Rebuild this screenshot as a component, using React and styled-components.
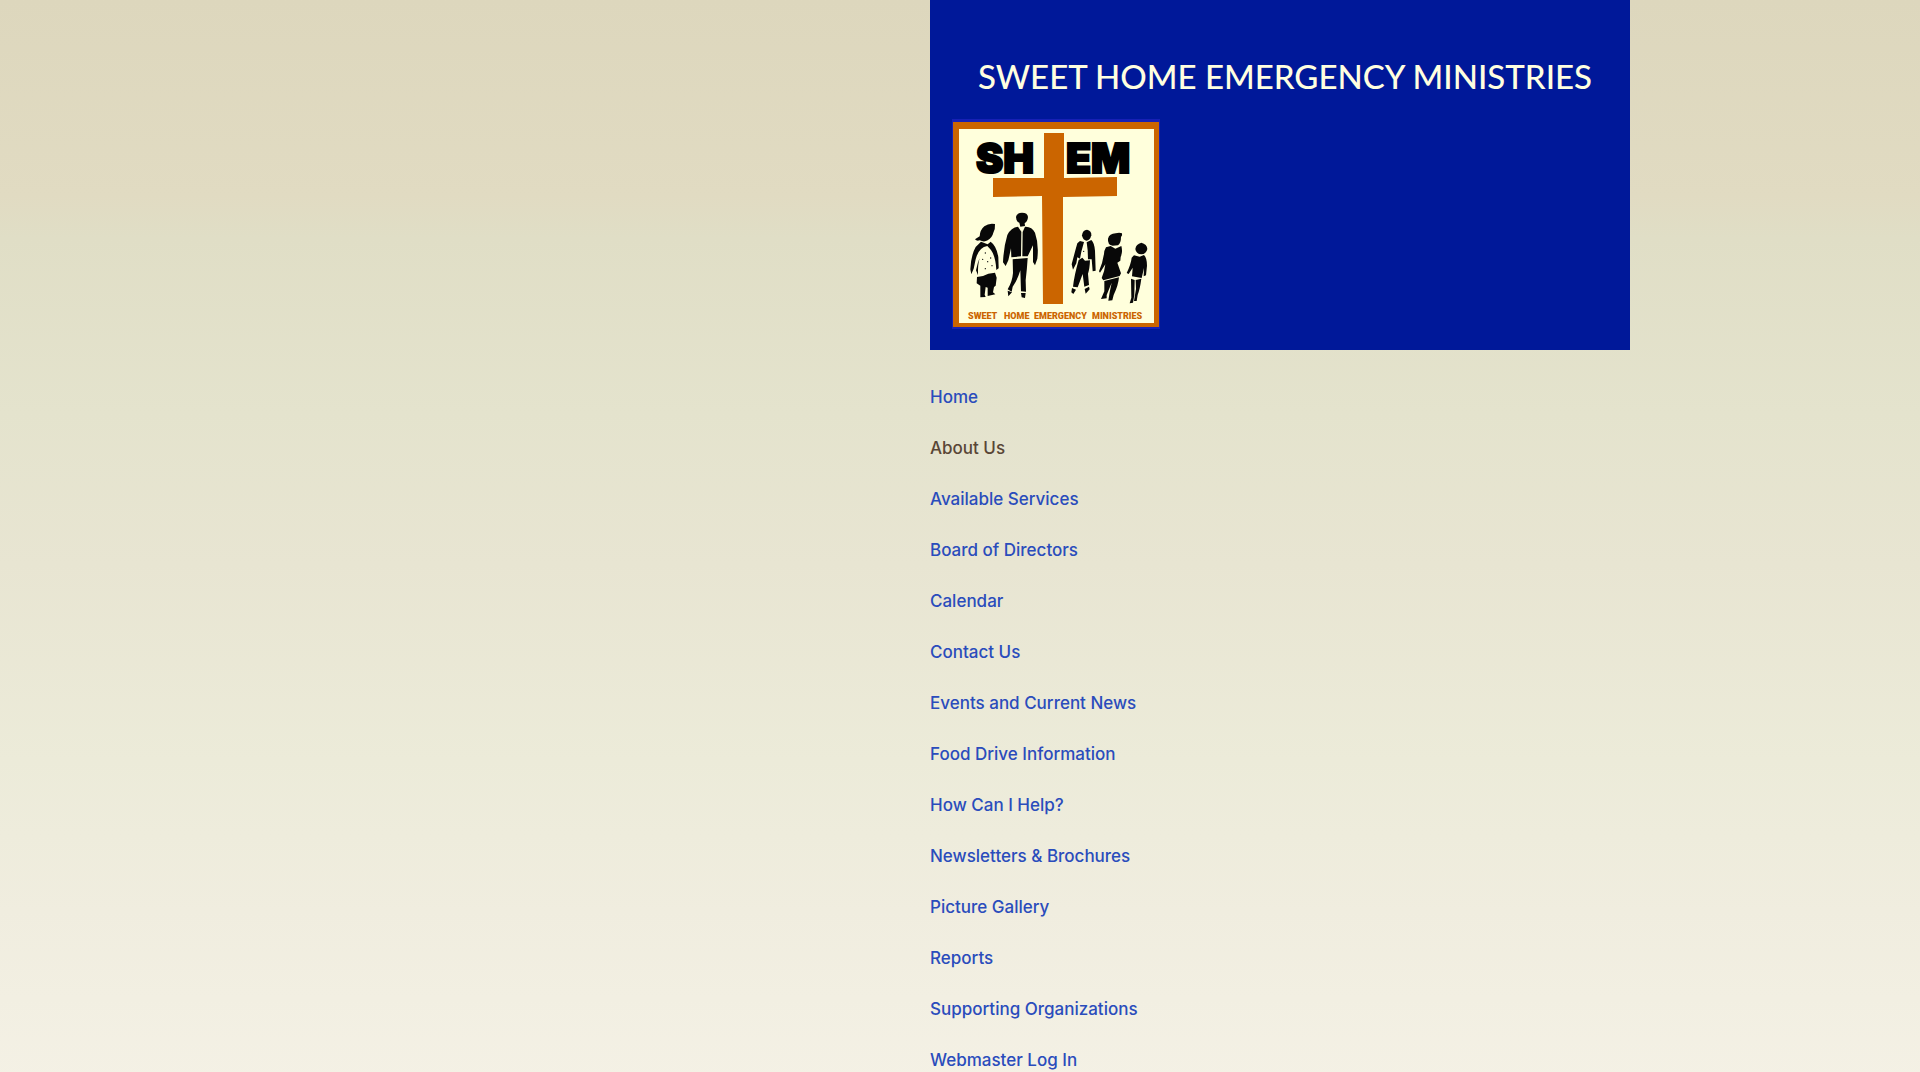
import React from "react";
import styled, { createGlobalStyle } from "styled-components";

const GlobalStyle = createGlobalStyle`
  * { box-sizing: border-box; }
  html { scrollbar-width: none; }
  body {
    margin: 0;
    min-height: 100vh;
    background: #f4f1e5 linear-gradient(180deg, #ddd7bd 0%, #e1dbc2 18%, #e0dec6 22%, #e4e3cd 38%, #e8e5d2 52%, #ecebd9 70%, #f0eddf 84%, #f4f1e5 100%) no-repeat;
    font-family: Inter, "Liberation Sans", sans-serif;
  }
`;

const Page = styled.div`
  display: flex;
  padding-left: calc(50% - 30px);
`;

const Column = styled.div`
  width: 700px;
  flex: none;
`;

const Banner = styled.header`
  display: flex;
  flex-direction: column;
  align-items: flex-start;
  gap: 19px;
  padding: 52px 22px 21px;
  background: #001899;
`;

const Title = styled.h1`
  align-self: center;
  margin: 0;
  padding-left: 10px;
  color: #ffffe0;
  font: 500 33px/48px Lato, sans-serif;
  white-space: nowrap;
`;

const Logo = styled.svg`
  display: block;
  width: 208px;
  height: 210px;
  flex: none;
`;

const Nav = styled.nav`
  padding-top: 21px;
`;

const Menu = styled.ul`
  margin: 0;
  padding: 0;
  list-style: none;
`;

const Item = styled.li`
  display: flex;
  align-items: center;
  height: 51px;
`;

const MenuLink = styled.a`
  color: ${(p) => (p.$current ? "#594636" : "#2a4cbc")};
  font-size: 17px;
  font-weight: 450;
  line-height: 24px;
  text-decoration: none;
  white-space: nowrap;
`;

const pages = [
  "Home",
  "About Us",
  "Available Services",
  "Board of Directors",
  "Calendar",
  "Contact Us",
  "Events and Current News",
  "Food Drive Information",
  "How Can I Help?",
  "Newsletters & Brochures",
  "Picture Gallery",
  "Reports",
  "Supporting Organizations",
  "Webmaster Log In",
];

function ShemLogo() {
  return (
    <Logo viewBox="0 0 208 210" role="img" aria-label="SHEM logo">
      <rect width="208" height="210" fill="#1720b5" />
      <rect x="1" y="3" width="206" height="205" fill="#cb6500" />
      <rect x="7" y="10" width="195" height="194" fill="#ffffdc" />
      <path d="M92 14H112V59L165 58V77L111 78V185H91L90 77L41 78V59H92Z" fill="#cb6500" />
      <g fontFamily="Inter, sans-serif" fontWeight="900" fontSize="41" stroke="#000" strokeWidth="2">
        <text x="24" y="54">SH</text>
        <text x="114" y="54">EM</text>
      </g>
      <g fontFamily="Roboto, sans-serif" fontWeight="900" fontSize="9" fill="#cb6500">
        <text x="16" y="200">SWEET</text>
        <text x="52" y="200">HOME</text>
        <text x="82" y="200">EMERGENCY</text>
        <text x="140" y="200">MINISTRIES</text>
      </g>
      <g transform="translate(-7 81) scale(.33333)" fill="#080808">
        <path d="M150 72Q132 68 118 79Q105 90 104 109L90 118Q95 124 104 121Q118 128 128 121Q142 112 145 98Q151 88 150 72Z" />
        <path d="M108 125L128 133L137 125Q155 138 160 172L161 205L154 210Q152 170 138 150L127 138Q101 142 92 178L86 206L79 223L76 208Q78 165 92 141Z" />
        <path d="M99 187L93 211L99 226Q98 193 104 175Z" />
        <path d="M96 231Q114 230 130 221L150 218L155 233L152 257L147 261L144 277L151 283L128 288L128 263L122 261L119 284L122 291L106 292L106 257L95 250Z" />
        <circle cx="121" cy="159" r="2" /><circle cx="113" cy="178" r="2" /><circle cx="128" cy="185" r="2" />
        <circle cx="137" cy="174" r="2" /><circle cx="121" cy="206" r="2" /><circle cx="141" cy="197" r="2" />
        <path d="M231 38Q248 38 249 51Q248 65 239 69L240 78L226 80L223 68Q213 64 213 51Q216 38 231 38Z" />
        <path d="M219 80L229 95L228 169L199 172L198 145L190 181L182 198L174 187Q176 141 187 105Q198 82 219 80Z" />
        <path d="M240 80Q261 79 270 98Q282 132 277 176L270 196L264 186L264 136L248 169L232 169L233 96Z" />
        <path d="M203 178L248 174Q246 208 242 241L243 275L228 274L226 211Q217 241 203 260L200 275L188 268Q202 245 204 219Z" />
        <path d="M188 272L201 277L190 289ZM228 279L242 279L240 294L230 292Z" />
      </g>
      <g transform="translate(98 81) scale(.33333)" fill="#080808">
        <path d="M111 89Q125 92 124 106Q120 122 109 122Q98 121 96 106Q98 90 111 89Z" />
        <path d="M90 123L102 126L94 155L90 176L82 172L79 190L69 209L65 193Q74 158 82 130Z" />
        <path d="M110 127L124 120Q133 128 135 152L137 212L128 214L125 178L114 178L113 151Z" />
        <path d="M86 180L97 173L105 182L120 181Q119 207 114 221L117 255L103 260L98 222L83 262L69 260Q73 225 86 180Z" />
        <path d="M66 264L78 269L70 282L64 277ZM104 267L117 260L119 268L107 281Z" />
        <circle cx="101" cy="154" r="2" />
        <path d="M216 100Q218 106 213 111Q213 130 204 136L188 137Q172 134 174 116Q178 101 197 100Q208 96 216 100Z" />
        <path d="M168 142L182 138L196 146L214 138Q219 155 212 171L211 182L202 188L213 220L209 228L160 241L155 234Q164 214 166 193L150 218L147 214Q160 184 163 153Z" />
        <path d="M163 243L207 232Q205 256 191 285L187 301L175 302L179 277L185 248L170 285L170 295L153 297L163 274Z" />
        <path d="M274 128Q291 132 292 147Q289 162 274 163Q258 162 256 147Q258 132 274 128Z" />
        <path d="M252 166L269 170L282 165Q291 174 291 197L288 226L281 229L282 204L275 234L246 229L248 203L236 222L230 219Q243 192 245 173Z" />
        <path d="M257 240L274 236Q270 266 263 285L260 303L252 303L258 267ZM243 236L254 240L253 285L249 308L239 310L244 293Z" />
      </g>
    </Logo>
  );
}

export default function App() {
  return (
    <>
      <GlobalStyle />
      <Page>
        <Column>
          <Banner>
            <Title>SWEET HOME EMERGENCY MINISTRIES</Title>
            <ShemLogo />
          </Banner>
          <Nav aria-label="Main">
            <Menu>
              {pages.map((name) => (
                <Item key={name}>
                  <MenuLink
                    href="#"
                    $current={name === "About Us"}
                    aria-current={name === "About Us" ? "page" : undefined}
                  >
                    {name}
                  </MenuLink>
                </Item>
              ))}
            </Menu>
          </Nav>
        </Column>
      </Page>
    </>
  );
}
